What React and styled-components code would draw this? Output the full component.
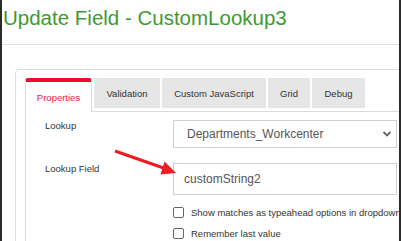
import React from 'react';
import styled, { createGlobalStyle } from 'styled-components';

const GlobalStyle = createGlobalStyle`
  html, body {
    margin: 0;
    padding: 0;
    background: #fff;
  }
  * {
    box-sizing: border-box;
  }
`;

const Frame = styled.div`
  position: relative;
  width: 401px;
  height: 241px;
  border-left: 2px solid #2b2b2b;
  border-right: 2px solid #2b2b2b;
  overflow: hidden;
  font-family: 'Liberation Sans', Arial, sans-serif;
  background: #fff;
`;

const Header = styled.div`
  height: 45px;
  padding: 6px 0 0 1px;
  border-bottom: 1px solid #e3e3e3;
`;

const Title = styled.h1`
  margin: 0;
  font-size: 20.5px;
  line-height: 24px;
  font-weight: normal;
  color: #3f9a2f;
  white-space: nowrap;
`;

const Body = styled.div`
  display: flex;
  padding: 24px 0 0 13px;
`;

const Panel = styled.div`
  flex: 0 0 440px;
  border: 1px solid #dcdcdc;
  border-radius: 4px;
  padding: 8px 0 0 9px;
`;

const TabBar = styled.div`
  display: flex;
  align-items: flex-start;
  gap: 2px;
  height: 34px;
  border-bottom: 1px solid #dcdcdc;
`;

const Tab = styled.div`
  flex: 0 0 ${(props) => props.width}px;
  display: flex;
  align-items: center;
  justify-content: center;
  font-size: 9.5px;
  white-space: nowrap;
  height: ${(props) => (props.active ? '34px' : '30px')};
  color: ${(props) => (props.active ? '#ec1a3a' : '#333')};
  background: ${(props) => (props.active ? '#fff' : '#e6e6e6')};
  border-top: ${(props) => (props.active ? '4px solid #ec0c2e' : 'none')};
  border-left: ${(props) => (props.active ? '1px solid #dcdcdc' : 'none')};
  border-right: ${(props) => (props.active ? '1px solid #dcdcdc' : 'none')};
  border-radius: ${(props) => (props.active ? '3px 3px 0 0' : '0')};
  position: relative;
  z-index: ${(props) => (props.active ? 1 : 0)};
`;

const TabContent = styled.div`
  border-left: 1px solid #dcdcdc;
  padding: 8px 0 20px 19px;
  min-height: 140px;
`;

const Row = styled.div`
  display: flex;
  align-items: flex-start;
  margin-bottom: ${(props) => props.gap || 0}px;
`;

const Label = styled.div`
  flex: 0 0 128px;
  font-size: 9.5px;
  line-height: 12px;
  color: #333;
`;

const SelectBox = styled.div`
  position: relative;
  width: 224px;
  height: 28px;
  border: 1px solid #cfcfcf;
  padding-left: 13px;
  display: flex;
  align-items: center;
  font-size: 12px;
  color: #555;
  white-space: nowrap;
`;

const Chevron = styled.svg`
  position: absolute;
  right: 4px;
  top: 9px;
`;

const TextBox = styled.div`
  width: 224px;
  height: 32px;
  border: 1px solid #cfcfcf;
  padding-left: 10px;
  display: flex;
  align-items: center;
  font-size: 12px;
  color: #555;
`;

const Checks = styled.div`
  margin: 12px 0 0 128px;
  display: flex;
  flex-direction: column;
  gap: 10px;
`;

const CheckRow = styled.label`
  display: flex;
  align-items: center;
  gap: 7px;
  height: 11px;
  font-size: 9.5px;
  color: #333;
  white-space: nowrap;
`;

const Box = styled.span`
  flex: 0 0 11px;
  width: 11px;
  height: 11px;
  border: 1px solid #666;
  border-radius: 2px;
  background: #fff;
`;

const Arrow = styled.svg`
  position: absolute;
  left: 0;
  top: 0;
  pointer-events: none;
`;

const tabs = [
  { name: 'Properties', width: 67, active: true },
  { name: 'Validation', width: 66 },
  { name: 'Custom JavaScript', width: 104 },
  { name: 'Grid', width: 42 },
  { name: 'Debug', width: 53 },
];

const App = () => {
  return (
    <>
      <GlobalStyle />
      <Frame>
        <Header>
          <Title>Update Field - CustomLookup3</Title>
        </Header>
        <Body>
          <Panel>
            <TabBar>
              {tabs.map((t) => (
                <Tab key={t.name} width={t.width} active={t.active}>
                  {t.name}
                </Tab>
              ))}
            </TabBar>
            <TabContent>
              <Row gap={15}>
                <Label>Lookup</Label>
                <SelectBox>
                  Departments_Workcenter
                  <Chevron width="10" height="8" viewBox="0 0 10 8">
                    <path d="M1.5 2 L5 5.5 L8.5 2" fill="none" stroke="#666" strokeWidth="1.8" />
                  </Chevron>
                </SelectBox>
              </Row>
              <Row>
                <Label>Lookup Field</Label>
                <TextBox>customString2</TextBox>
              </Row>
              <Checks>
                <CheckRow>
                  <Box />
                  Show matches as typeahead options in dropdown
                </CheckRow>
                <CheckRow>
                  <Box />
                  Remember last value
                </CheckRow>
              </Checks>
            </TabContent>
          </Panel>
        </Body>
        {/* annotation arrow pointing at the lookup field */}
        <Arrow width="401" height="241" viewBox="0 0 401 241">
          <line x1="113" y1="151" x2="163" y2="168.5" stroke="#ee1b24" strokeWidth="3" />
          <polygon points="174,173 162.5,161.5 158.5,174.5" fill="#ee1b24" />
        </Arrow>
      </Frame>
    </>
  );
};

export default App;
